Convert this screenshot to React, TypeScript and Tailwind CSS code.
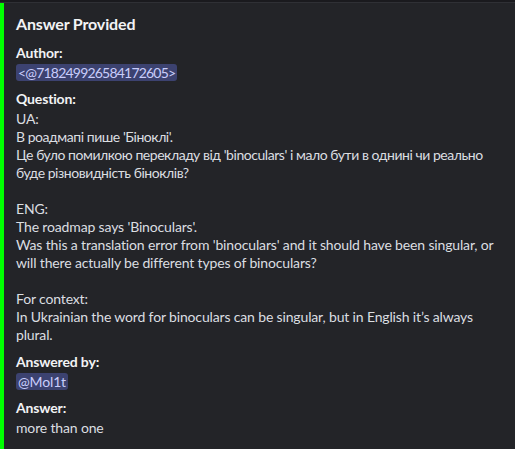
import React from 'react'

const Mention: React.FC<{ children: React.ReactNode }> = ({ children }) => (
    <span className="rounded-[3px] bg-[#3c4270] px-[2px] text-[#c9cdfb]">{children}</span>
)

const Field: React.FC<{ name: string; children: React.ReactNode; className?: string }> = ({ name, children, className }) => (
    <div className={className}>
        <div className="text-[14px] font-bold leading-[18px] text-[#f2f3f5]">{name}</div>
        <div className="mt-[2px] text-[14px] leading-[18px] text-[#dbdee1]">{children}</div>
    </div>
)

export default function App() {
    return (
        <div className="flex h-[449px] w-[515px] flex-col bg-[#1a1a1e] font-['Lato','Liberation_Sans',sans-serif]">
            <div className="h-[3px] border-b border-[#2f3035]" />
            <div className="flex flex-1 bg-[#232428]">
                <div className="w-[4px] bg-[#00ff00]" />
                <div className="flex flex-col pl-[12px] pt-[10px] tracking-[-0.15px]">
                    <div className="text-[16px] font-bold leading-[22px] text-[#f2f3f5]">Answer Provided</div>
                    <Field name="Author:" className="mt-[9px]">
                        <span className="tracking-[-0.8px]">
                            <Mention>&lt;@718249926584172605&gt;</Mention>
                        </span>
                    </Field>
                    <Field name="Question:" className="mt-[8px]">
                        <div className="whitespace-nowrap">
                            UA:<br />
                            <span className="tracking-[-0.45px]">В роадмапі пише 'Біноклі'.</span><br />
                            <span className="tracking-[-0.45px]">Це було помилкою перекладу від 'binoculars' і мало бути в однині чи реально</span><br />
                            <span className="tracking-[-0.45px]">буде різновидність біноклів?</span><br />
                            <br />
                            ENG:<br />
                            The roadmap says 'Binoculars'.<br />
                            Was this a translation error from 'binoculars' and it should have been singular, or<br />
                            will there actually be different types of binoculars?<br />
                            <br />
                            For context:<br />
                            In Ukrainian the word for binoculars can be singular, but in English it’s always<br />
                            plural.
                        </div>
                    </Field>
                    <Field name="Answered by:" className="mt-[9px]">
                        <Mention>@Mol1t</Mention>
                    </Field>
                    <Field name="Answer:" className="mt-[8px]">
                        more than one
                    </Field>
                </div>
            </div>
        </div>
    )
}
